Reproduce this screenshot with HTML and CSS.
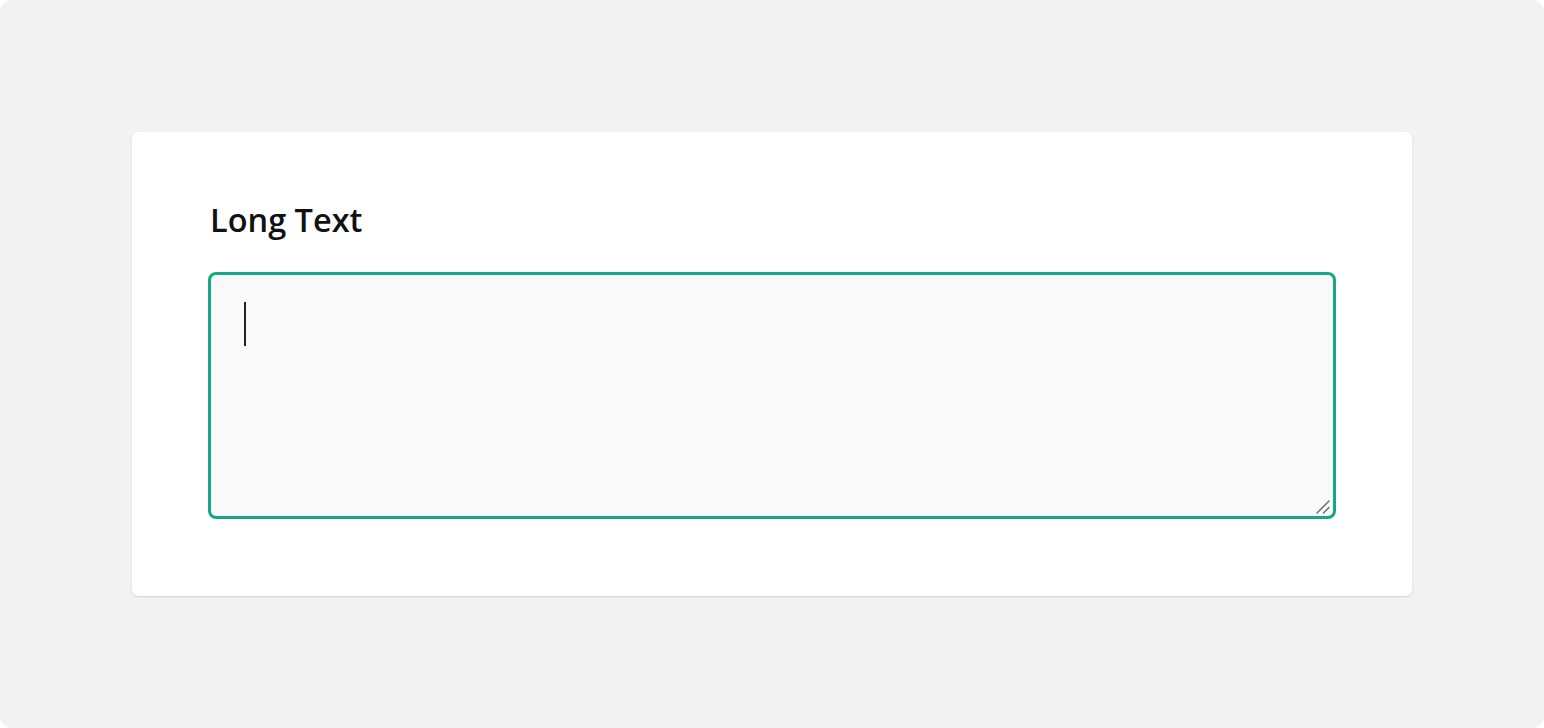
FILE: index.html
```html
<!DOCTYPE html>
<html lang="en">
<head>
<meta charset="utf-8">
<title>Long Text</title>
<link rel="stylesheet" href="styles.css">
</head>
<body>
<div class="frame">
  <div class="card">
    <label class="label" for="longtext">Long Text</label>
    <div class="field">
      <textarea id="longtext" class="textarea"></textarea>
      <span class="caret"></span>
      <svg class="grip" width="16" height="16" viewBox="0 0 16 16" aria-hidden="true">
        <line x1="2" y1="14" x2="14" y2="2" stroke="#6f6f6f" stroke-width="1.5" stroke-linecap="round"/>
        <line x1="8.5" y1="14" x2="14" y2="8.5" stroke="#6f6f6f" stroke-width="1.5" stroke-linecap="round"/>
      </svg>
    </div>
  </div>
</div>
</body>
</html>
```
FILE: styles.css
```css
html, body {
  margin: 0;
  padding: 0;
  background: #ffffff;
}
.frame {
  width: 1544px;
  height: 728px;
  box-sizing: border-box;
  background: #f2f2f2;
  border-radius: 12px;
  padding: 132px 132px 0 132px;
}
.card {
  background: #ffffff;
  border-radius: 6px;
  height: 464px;
  box-sizing: border-box;
  padding: 68px 76px 0 76px;
  box-shadow: 0 1px 2px rgba(0, 0, 0, 0.14);
  display: flex;
  flex-direction: column;
}
.label {
  font-family: "Open Sans", "Liberation Sans", sans-serif;
  font-weight: 600;
  font-size: 32.5px;
  line-height: 40px;
  color: #111111;
  letter-spacing: 0;
  margin-left: 2px;
  margin-bottom: 32px;
}
.field {
  position: relative;
  width: 1128px;
  height: 247px;
}
.textarea {
  display: block;
  width: 100%;
  height: 100%;
  box-sizing: border-box;
  margin: 0;
  border: 3px solid #14a986;
  border-radius: 8px;
  background: #f9f9f9;
  outline: none;
  resize: none;
  padding: 30px 34px;
  font-family: "Open Sans", "Liberation Sans", sans-serif;
  font-size: 28px;
}
.caret {
  position: absolute;
  left: 36px;
  top: 30px;
  width: 2px;
  height: 44px;
  background: #222222;
}
.grip {
  position: absolute;
  right: 5px;
  bottom: 4px;
}
```
